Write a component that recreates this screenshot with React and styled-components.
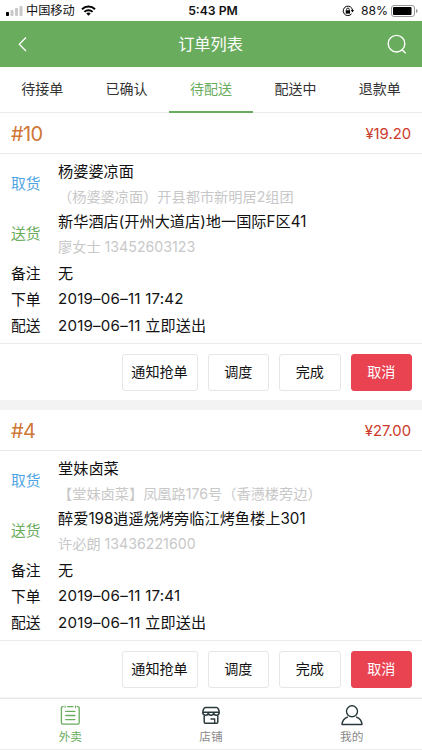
import { useState } from "react";
import styled, { createGlobalStyle } from "styled-components";

const GlobalStyle = createGlobalStyle`
  * { box-sizing: border-box; }
  body {
    margin: 0;
    background: #fff;
    font-family: Inter, "Noto Sans CJK SC", sans-serif;
  }
`;

const Page = styled.div`
  display: flex;
  flex-direction: column;
  width: 422px;
  height: 750px;
  overflow: hidden;
  background: #fff;
  color: #111;
`;

const StatusBar = styled.div`
  display: grid;
  grid-template-columns: 1fr auto 1fr;
  align-items: center;
  flex: none;
  height: 21px;
  padding: 0 4px 0 6px;
  font-size: 12px;
  line-height: 21px;
`;

const StatusGroup = styled.div`
  display: flex;
  align-items: center;
  justify-content: ${p => p.$end ? 'flex-end' : 'flex-start'};
  height: 21px;
`;

const Carrier = styled.span`
  margin: 0 6px 0 3px;
  font-size: 12.2px;
`;

const Clock = styled.span`
  padding-left: 2px;
  font-size: 12.2px;
  font-weight: 600;
`;

const Percent = styled.span`
  margin: 0 3px 0 7px;
  font-size: 12.2px;
`;

const Header = styled.header`
  display: flex;
  align-items: center;
  justify-content: space-between;
  flex: none;
  height: 46px;
  padding: 0 15px 0 17px;
  background: #69ac5d;
  color: #fff;
`;

const Title = styled.h1`
  margin: 0;
  padding: 0 0 2px 5px;
  font-size: 16.2px;
  font-weight: 400;
`;

const Tabs = styled.nav`
  display: flex;
  flex: none;
  height: 46px;
  border-bottom: 1px solid #ebebeb;
`;

const Tab = styled.button`
  flex: 1;
  height: 46px;
  padding: 0;
  border: 0;
  border-bottom: 2px solid ${p => p.$active ? '#69ac5d' : 'transparent'};
  background: none;
  color: ${p => p.$active ? '#69ac5d' : '#333'};
  font: inherit;
  font-size: 14px;
  line-height: 44px;
`;

const List = styled.main`
  flex: 1;
  min-height: 0;
  overflow: hidden;
  background: #f3f3f3;
`;

const Card = styled.section`
  margin-bottom: 10.4px;
  background: #fff;
`;

const CardHead = styled.div`
  display: flex;
  align-items: center;
  justify-content: space-between;
  height: 41px;
  padding: 0 11px;
  border-bottom: 1px solid #ebebeb;
`;

const OrderNo = styled.span`
  padding-top: 1px;
  color: #cf7636;
  font-size: 20px;
  letter-spacing: -0.6px;
`;

const Price = styled.span`
  padding-top: 1px;
  color: #cb3a2b;
  font-size: 14.8px;
`;

const CardBody = styled.div`
  height: 190px;
  padding: 5px 11px 0;
  border-bottom: 1px solid #ebebeb;
`;

const Row = styled.div`
  display: grid;
  grid-template-columns: 47px 1fr;
  align-items: center;
  height: ${p => p.$tall ? '50px' : '26px'};
`;

const Label = styled.span`
  padding-bottom: ${p => p.$color ? '4px' : '0'};
  color: ${p => p.$color || '#111'};
  font-size: 14.8px;
`;

const Name = styled.div`
  font-size: 15.2px;
  line-height: 25px;
  white-space: nowrap;
`;

const Sub = styled.div`
  color: #c8c8c8;
  font-size: 14.2px;
  line-height: 25px;
  white-space: nowrap;
`;

const Value = styled.span`
  font-size: 15.1px;
  letter-spacing: 0.22px;
  white-space: nowrap;
`;

const Actions = styled.div`
  display: flex;
  align-items: center;
  justify-content: flex-end;
  gap: 10px;
  height: 56px;
  padding: 0 10px;
`;

const Action = styled.button`
  width: ${p => p.$wide ? '76px' : '61.5px'};
  height: 37px;
  padding: 0 0 2px;
  border: 1px solid ${p => p.$danger ? '#e94352' : '#e6e6e6'};
  border-radius: 3px;
  background: ${p => p.$danger ? '#e94352' : '#fff'};
  color: ${p => p.$danger ? '#fff' : '#111'};
  font: inherit;
  font-size: 14.1px;
`;

const TabBar = styled.footer`
  display: flex;
  flex: none;
  height: 52px;
  border-top: 1px solid #e8e8e8;
  border-bottom: 1px solid #ebebeb;
  background: #fff;
`;

const TabBarItem = styled.div`
  display: flex;
  flex: 1;
  flex-direction: column;
  align-items: center;
  padding-top: 5px;
  color: ${p => p.$active ? '#69ac5d' : '#8a8a8a'};
  font-size: 11.7px;
  line-height: 18px;

  svg {
    margin-bottom: 2px;
    color: ${p => p.$active ? '#69ac5d' : '#2b3a3d'};
  }
`;

const SignalIcon = () => (
  <svg width="17" height="12" viewBox="0 0 17 12">
    <rect x="0" y="7" width="3" height="4" rx="0.8" fill="#000" />
    <rect x="4.5" y="5" width="3" height="6" rx="0.8" fill="#c8c8c8" />
    <rect x="9" y="3" width="3" height="8" rx="0.8" fill="#c8c8c8" />
    <rect x="13.5" y="1" width="3" height="10" rx="0.8" fill="#c8c8c8" />
  </svg>
);

const WifiIcon = () => (
  <svg width="15" height="11" viewBox="0 0 15 11" fill="none" stroke="#000" strokeWidth="2">
    <path d="M1 4.2a9.3 9.3 0 0 1 13 0" />
    <path d="M3.4 6.9a5.9 5.9 0 0 1 8.2 0" />
    <path d="M7.5 10.8 5.3 8.6a3.2 3.2 0 0 1 4.4 0z" fill="#000" stroke="none" />
  </svg>
);

const LockIcon = () => (
  <svg width="12" height="12" viewBox="0 0 12 12" fill="none" stroke="#000">
    <path d="M9.6 8.8A4.7 4.7 0 1 1 10.6 5.4" />
    <path d="M8.8 5h3.2L10.5 7.4z" fill="#000" stroke="none" />
    <rect x="3.7" y="5.3" width="4.4" height="3.3" fill="#000" stroke="none" />
    <path d="M4.6 5.5V4.4a1.3 1.3 0 0 1 2.6 0v1.1" strokeWidth="0.9" />
  </svg>
);

const BatteryIcon = () => (
  <svg width="27" height="12" viewBox="0 0 27 12">
    <rect x="0.5" y="0.5" width="23" height="11" rx="2.5" fill="none" stroke="#999" />
    <rect x="2" y="2" width="18.5" height="8" rx="1" />
    <path d="M25 4v4c1-.4 1.6-1.1 1.6-2S26 4.4 25 4z" fill="#999" />
  </svg>
);

const BackIcon = () => (
  <svg width="12" height="16" viewBox="0 0 12 16" fill="none" stroke="currentColor" strokeWidth="1.3">
    <path d="M9 1.5 2.3 8.3 9 15" />
  </svg>
);

const SearchIcon = () => (
  <svg width="20" height="20" viewBox="0 0 20 20" fill="none" stroke="currentColor" strokeWidth="1.4">
    <circle cx="9.5" cy="9.7" r="8.3" />
    <path d="M15 15.7 18.7 19.2" />
  </svg>
);

const OrderIcon = () => (
  <svg width="22" height="22" viewBox="0 0 22 22" fill="none" stroke="currentColor" strokeWidth="1.3" strokeLinecap="round">
    <path d="M4.2 2.6H3.7A1.3 1.3 0 0 0 2.4 3.9V18.8A1.3 1.3 0 0 0 3.7 20.1H18.9A1.3 1.3 0 0 0 20.2 18.8V3.9A1.3 1.3 0 0 0 18.9 2.6H18.4" />
    <path d="M8.6 2.6H14" />
    <path d="M6.1 2v1.7M16.5 2v1.7" strokeWidth="1" />
    <path d="M6.8 7.4H15.9M6.8 11.5H15.9M6.8 15.6H15.9" />
  </svg>
);

const ShopIcon = () => (
  <svg width="22" height="22" viewBox="0 0 22 22" fill="none" stroke="currentColor" strokeWidth="1.5" strokeLinejoin="round">
    <path d="M5.5 3.5H16.5C18 3.5 19.2 6.2 19.2 8.2H2.8C2.8 6.2 4 3.5 5.5 3.5z" />
    <path d="M2.8 8.2C2.8 10.2 4.2 11.2 5.6 11.2S8.3 10.3 8.3 8.7C8.3 10.3 9.6 11.2 11 11.2S13.7 10.3 13.7 8.7C13.7 10.3 15 11.2 16.4 11.2S19.2 10.2 19.2 8.2" />
    <path d="M4.2 11.5V18A1.2 1.2 0 0 0 5.4 19.2H16.6A1.2 1.2 0 0 0 17.8 18V11.5" />
    <path d="M10.5 15H14.7V19" strokeWidth="1.3" />
  </svg>
);

const UserIcon = () => (
  <svg width="22" height="22" viewBox="0 0 22 22" fill="none" stroke="currentColor" strokeWidth="1.4" strokeLinejoin="round">
    <circle cx="11" cy="7.3" r="5.5" />
    <path d="M6.8 13C3.5 14.1 1.3 17 1 20.5h20c-.3-3.5-2.5-6.4-5.8-7.5" />
  </svg>
);

const tabs = ['待接单', '已确认', '待配送', '配送中', '退款单'];

const orders = [
  {
    no: '#10',
    price: '¥19.20',
    shop: '杨婆婆凉面',
    shopAddress: '（杨婆婆凉面）开县都市新明居2组团',
    address: '新华酒店(开州大道店)地一国际F区41',
    contact: '廖女士 13452603123',
    remark: '无',
    created: '2019–06–11 17:42',
    delivery: '2019–06–11 立即送出'
  },
  {
    no: '#4',
    price: '¥27.00',
    shop: '堂妹卤菜',
    shopAddress: '【堂妹卤菜】凤凰路176号（香懑楼旁边）',
    address: '醉爱198逍遥烧烤旁临江烤鱼楼上301',
    contact: '许必朗 13436221600',
    remark: '无',
    created: '2019–06–11 17:41',
    delivery: '2019–06–11 立即送出'
  }
];

const OrderCard = ({ order }) => (
  <Card>
    <CardHead>
      <OrderNo>{order.no}</OrderNo>
      <Price>{order.price}</Price>
    </CardHead>
    <CardBody>
      <Row $tall>
        <Label $color="#4fa5e2">取货</Label>
        <div>
          <Name>{order.shop}</Name>
          <Sub>{order.shopAddress}</Sub>
        </div>
      </Row>
      <Row $tall>
        <Label $color="#69ac5d">送货</Label>
        <div>
          <Name>{order.address}</Name>
          <Sub>{order.contact}</Sub>
        </div>
      </Row>
      <Row>
        <Label>备注</Label>
        <Value>{order.remark}</Value>
      </Row>
      <Row>
        <Label>下单</Label>
        <Value>{order.created}</Value>
      </Row>
      <Row>
        <Label>配送</Label>
        <Value>{order.delivery}</Value>
      </Row>
    </CardBody>
    <Actions>
      <Action $wide>通知抢单</Action>
      <Action>调度</Action>
      <Action>完成</Action>
      <Action $danger>取消</Action>
    </Actions>
  </Card>
);

export default function App() {
  const [active, setActive] = useState(2);
  return <Page>
    <GlobalStyle />
    <StatusBar>
      <StatusGroup>
        <SignalIcon />
        <Carrier>中国移动</Carrier>
        <WifiIcon />
      </StatusGroup>
      <Clock>5:43 PM</Clock>
      <StatusGroup $end>
        <LockIcon />
        <Percent>88%</Percent>
        <BatteryIcon />
      </StatusGroup>
    </StatusBar>
    <Header>
      <BackIcon />
      <Title>订单列表</Title>
      <SearchIcon />
    </Header>
    <Tabs>
      {tabs.map((tab, key) => <Tab key={key} $active={key === active} onClick={() => setActive(key)}>{tab}</Tab>)}
    </Tabs>
    <List>
      {orders.map(order => <OrderCard key={order.no} order={order} />)}
    </List>
    <TabBar>
      <TabBarItem $active><OrderIcon />外卖</TabBarItem>
      <TabBarItem><ShopIcon />店铺</TabBarItem>
      <TabBarItem><UserIcon />我的</TabBarItem>
    </TabBar>
  </Page>
}
